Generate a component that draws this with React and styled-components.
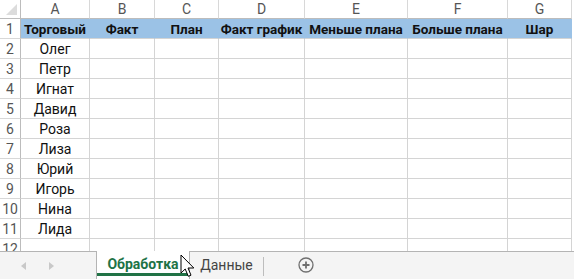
import React from "react";
import styled, { createGlobalStyle } from "styled-components";

const Global = createGlobalStyle`
  html, body { margin: 0; padding: 0; background: #ffffff; }
  body { font-family: Roboto, "Liberation Sans", sans-serif; }
`;

const COLS = [69, 65, 64, 86, 103, 100, 64];
const LETTERS = ["A", "B", "C", "D", "E", "F", "G"];
const HEADS = ["Торговый", "Факт", "План", "Факт график", "Меньше плана", "Больше плана", "Шар"];
const NAMES = ["Олег", "Петр", "Игнат", "Давид", "Роза", "Лиза", "Юрий", "Игорь", "Нина", "Лида", ""];

const Page = styled.div`
  width: 574px;
  height: 279px;
  display: flex;
  flex-direction: column;
  overflow: hidden;
  position: relative;
`;

const SheetArea = styled.div`
  height: 251px;
  overflow: hidden;
  flex: none;
`;

const Grid = styled.div`
  display: grid;
  grid-template-columns: 21px ${COLS.map((c) => c + "px").join(" ")};
  grid-template-rows: 19px;
  grid-auto-rows: 20px;
  width: 572px;
`;

const Corner = styled.div`
  box-sizing: border-box;
  border-right: 1px solid #bcbcbc;
  border-bottom: 1px solid #bcbcbc;
  position: relative;
  &::after {
    content: "";
    position: absolute;
    right: 3px;
    bottom: 3px;
    width: 0;
    height: 0;
    border-left: 11px solid transparent;
    border-bottom: 11px solid #dcdcdc;
  }
`;

const ColHead = styled.div`
  box-sizing: border-box;
  border-right: 1px solid #d8d8d8;
  border-bottom: 1px solid #bcbcbc;
  display: flex;
  align-items: center;
  justify-content: center;
  font-size: 14px;
  color: #555;
`;

const RowHead = styled.div`
  box-sizing: border-box;
  border-right: 1px solid #bcbcbc;
  border-bottom: 1px solid #d8d8d8;
  display: flex;
  align-items: center;
  justify-content: center;
  font-size: 14px;
  color: #555;
`;

const Cell = styled.div`
  box-sizing: border-box;
  border-bottom: 1px solid #d4d4d4;
  border-right: 1px solid ${(p) => (p.$head ? "#9bc2e6" : "#d4d4d4")};
  background: ${(p) => (p.$head ? "#9bc2e6" : "#ffffff")};
  display: flex;
  align-items: center;
  justify-content: center;
  white-space: nowrap;
  overflow: hidden;
  font-size: ${(p) => (p.$head ? "13.5px" : "14px")};
  font-weight: ${(p) => (p.$head ? 700 : 400)};
  color: #111;
`;

const TabBar = styled.div`
  flex: 1;
  box-sizing: border-box;
  border-top: 1px solid #b4b4b4;
  background: #f4f4f4;
  display: flex;
  align-items: stretch;
`;

const NavArrows = styled.div`
  width: 96px;
  display: flex;
  align-items: center;
  padding-left: 21px;
  gap: 23px;
  box-sizing: border-box;
`;

const Arrow = styled.div`
  width: 0;
  height: 0;
  border-top: 4px solid transparent;
  border-bottom: 4px solid transparent;
  ${(p) =>
    p.$dir === "left"
      ? "border-right: 5px solid #c8c8c8;"
      : "border-left: 5px solid #c8c8c8;"}
`;

const Tab = styled.div`
  box-sizing: border-box;
  width: ${(p) => p.$w}px;
  margin-top: ${(p) => (p.$active ? "-1px" : "0")};
  background: ${(p) => (p.$active ? "#ffffff" : "transparent")};
  border-left: ${(p) => (p.$active ? "1px solid #b4b4b4" : "none")};
  border-right: ${(p) => (p.$active ? "1px solid #b4b4b4" : "none")};
  display: flex;
  align-items: center;
  justify-content: center;
  font-size: 14px;
  font-weight: ${(p) => (p.$active ? 700 : 400)};
  color: ${(p) => (p.$active ? "#217346" : "#444")};
  position: relative;
  padding-bottom: 2px;
  &::after {
    content: "";
    display: ${(p) => (p.$active ? "block" : "none")};
    position: absolute;
    left: 0;
    right: 0;
    bottom: 3px;
    height: 3px;
    background: #217346;
  }
`;

const Separator = styled.div`
  width: 1px;
  background: #bdbdbd;
  margin: 5px 0 3px;
`;

const AddButton = styled.div`
  margin-left: 34px;
  display: flex;
  align-items: center;
  padding-bottom: 2px;
`;

const Cursor = styled.svg`
  position: absolute;
  left: 180px;
  top: 254px;
`;

export default function App() {
  return (
    <Page>
      <Global />
      <SheetArea>
        <Grid>
          <Corner />
          {LETTERS.map((l) => (
            <ColHead key={l}>{l}</ColHead>
          ))}
          <RowHead>1</RowHead>
          {HEADS.map((h) => (
            <Cell key={h} $head>
              {h}
            </Cell>
          ))}
          {NAMES.map((n, i) => (
            <React.Fragment key={i}>
              <RowHead>{i + 2}</RowHead>
              <Cell>{n}</Cell>
              {COLS.slice(1).map((_, j) => (
                <Cell key={j} />
              ))}
            </React.Fragment>
          ))}
        </Grid>
      </SheetArea>
      <TabBar>
        <NavArrows>
          <Arrow $dir="left" />
          <Arrow $dir="right" />
        </NavArrows>
        <Tab $active $w={94}>Обработка</Tab>
        <Tab $w={73}>Данные</Tab>
        <Separator />
        <AddButton>
          <svg width="16" height="16" viewBox="0 0 16 16">
            <circle cx="8" cy="8" r="7" fill="none" stroke="#6f6f6f" strokeWidth="1.3" />
            <path d="M8 4.5v7M4.5 8h7" stroke="#6f6f6f" strokeWidth="1.8" />
          </svg>
        </AddButton>
      </TabBar>
      <Cursor width="16" height="26" viewBox="0 0 16 26">
        <path
          d="M1 1 L1 19 L5.2 15 L8.3 22.3 L11 21.2 L8 14 L13.8 14 Z"
          fill="#ffffff"
          stroke="#000000"
          strokeWidth="1"
          strokeLinejoin="miter"
        />
      </Cursor>
    </Page>
  );
}
